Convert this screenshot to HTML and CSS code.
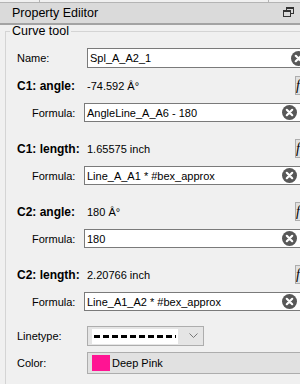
FILE: index.html
```html
<!DOCTYPE html>
<html lang="en">
<head>
    <meta charset="UTF-8">
    <meta name="viewport" content="width=device-width, initial-scale=1.0">
    <title>Property Ediitor</title>
    <link rel="stylesheet" href="styles.css">
</head>
<body>
    <div class="dock">
        <div class="top-strip">
            <span class="strip-cell first"></span>
            <span class="strip-cell middle"></span>
            <span class="strip-cell last"></span>
        </div>

        <div class="title-bar">
            <span class="title">Property Ediitor</span>
            <svg class="float-icon" width="11" height="10" viewBox="0 0 11 10">
                <rect x="3.5" y="0.5" width="7" height="6" fill="none" stroke="#333"/>
                <rect x="3" y="0" width="8" height="2" fill="#333"/>
                <rect x="0.5" y="3.5" width="7" height="6" fill="#dadada" stroke="#333"/>
                <rect x="0" y="3" width="8" height="2" fill="#333"/>
            </svg>
        </div>

        <div class="panel">
            <fieldset class="group">
                <legend>Curve tool</legend>

                <div class="row name-row">
                    <span class="label">Name:</span>
                    <div class="input wide">
                        <span class="text">Spl_A_A2_1</span>
                        <svg class="clear" width="15" height="15" viewBox="0 0 15 15">
                            <circle cx="7.5" cy="7.5" r="7.5" fill="#585858"/>
                            <path d="M4.8 4.8 L10.2 10.2 M10.2 4.8 L4.8 10.2" stroke="#fff" stroke-width="2.2" stroke-linecap="round"/>
                        </svg>
                    </div>
                </div>

                <!-- C1 angle -->
                <div class="section first">
                    <div class="row head-row">
                        <span class="label bold">C1: angle:</span>
                        <span class="value">-74.592 Â°</span>
                        <span class="fx">f</span>
                    </div>
                    <div class="row formula-row">
                        <span class="label small">Formula:</span>
                        <div class="input">
                            <span class="text">AngleLine_A_A6 - 180</span>
                            <svg class="clear" width="15" height="15" viewBox="0 0 15 15">
                                <circle cx="7.5" cy="7.5" r="7.5" fill="#585858"/>
                                <path d="M4.8 4.8 L10.2 10.2 M10.2 4.8 L4.8 10.2" stroke="#fff" stroke-width="2.2" stroke-linecap="round"/>
                            </svg>
                        </div>
                    </div>
                </div>

                <!-- C1 length -->
                <div class="section">
                    <div class="row head-row">
                        <span class="label bold">C1: length:</span>
                        <span class="value">1.65575 inch</span>
                        <span class="fx">f</span>
                    </div>
                    <div class="row formula-row">
                        <span class="label small">Formula:</span>
                        <div class="input">
                            <span class="text">Line_A_A1 * #bex_approx</span>
                            <svg class="clear" width="15" height="15" viewBox="0 0 15 15">
                                <circle cx="7.5" cy="7.5" r="7.5" fill="#585858"/>
                                <path d="M4.8 4.8 L10.2 10.2 M10.2 4.8 L4.8 10.2" stroke="#fff" stroke-width="2.2" stroke-linecap="round"/>
                            </svg>
                        </div>
                    </div>
                </div>

                <!-- C2 angle -->
                <div class="section">
                    <div class="row head-row">
                        <span class="label bold">C2: angle:</span>
                        <span class="value">180 Â°</span>
                        <span class="fx">f</span>
                    </div>
                    <div class="row formula-row">
                        <span class="label small">Formula:</span>
                        <div class="input">
                            <span class="text">180</span>
                            <svg class="clear" width="15" height="15" viewBox="0 0 15 15">
                                <circle cx="7.5" cy="7.5" r="7.5" fill="#585858"/>
                                <path d="M4.8 4.8 L10.2 10.2 M10.2 4.8 L4.8 10.2" stroke="#fff" stroke-width="2.2" stroke-linecap="round"/>
                            </svg>
                        </div>
                    </div>
                </div>

                <!-- C2 length -->
                <div class="section">
                    <div class="row head-row">
                        <span class="label bold">C2: length:</span>
                        <span class="value">2.20766 inch</span>
                        <span class="fx">f</span>
                    </div>
                    <div class="row formula-row">
                        <span class="label small">Formula:</span>
                        <div class="input">
                            <span class="text">Line_A1_A2 * #bex_approx</span>
                            <svg class="clear" width="15" height="15" viewBox="0 0 15 15">
                                <circle cx="7.5" cy="7.5" r="7.5" fill="#585858"/>
                                <path d="M4.8 4.8 L10.2 10.2 M10.2 4.8 L4.8 10.2" stroke="#fff" stroke-width="2.2" stroke-linecap="round"/>
                            </svg>
                        </div>
                    </div>
                </div>

                <div class="row linetype-row">
                    <span class="label">Linetype:</span>
                    <div class="combo">
                        <span class="dash-box">
                            <svg width="82" height="15" viewBox="0 0 82 15">
                                <line x1="0" y1="7.5" x2="82" y2="7.5" stroke="#000" stroke-width="3" stroke-dasharray="6 3"/>
                            </svg>
                        </span>
                        <svg class="chevron" width="9" height="6" viewBox="0 0 9 6">
                            <polyline points="0.5,0.5 4.5,4.5 8.5,0.5" fill="none" stroke="#777" stroke-width="1"/>
                        </svg>
                    </div>
                </div>

                <div class="row color-row">
                    <span class="label">Color:</span>
                    <div class="color-btn">
                        <span class="swatch"></span>
                        <span>Deep Pink</span>
                    </div>
                </div>
            </fieldset>
        </div>
    </div>
</body>
</html>
```

FILE: styles.css
```css
/* Property editor dock */
body {
    margin: 0;
    font-family: 'Liberation Sans', Arial, sans-serif;
    font-size: 11px;
    color: #000;
    background-color: #f0f0f0;
}

.dock {
    width: 300px;
    height: 384px;
    overflow: hidden;
    background-color: #f0f0f0;
}

.top-strip {
    display: flex;
    height: 2px;
    border-bottom: 1px solid #b4b4b4;
}

.strip-cell {
    background-color: #f0f0f0;
}

.strip-cell.first {
    width: 39px;
    border-right: 1px solid #b4b4b4;
}

.strip-cell.middle {
    width: 228px;
    border-right: 1px solid #b4b4b4;
}

.strip-cell.last {
    flex: 1;
}

.title-bar {
    display: flex;
    align-items: center;
    height: 20px;
    padding: 0 6px 0 12px;
    background-color: #dadada;
    border-bottom: 2px solid #a3a3a3;
}

.title {
    font-size: 12.5px;
    flex: 1;
}

.float-icon {
    margin-top: -2px;
}

.panel {
    padding: 0;
}

.group {
    width: 300px;
    margin: 0 0 0 5px;
    padding: 11px 20px 20px 11px;
    border: 1px solid #d4d4d4;
    min-width: 0;
}

.group legend {
    margin-left: -7px;
    padding: 0 2px;
    font-size: 12.5px;
    line-height: 12px;
}

.row {
    display: flex;
    align-items: center;
}

.label {
    width: 70px;
    flex-shrink: 0;
}

.label.bold {
    font-weight: bold;
    font-size: 12px;
}

.label.small {
    width: 52px;
    margin-left: 15px;
}

.input {
    display: flex;
    align-items: center;
    width: 218px;
    height: 19px;
    box-sizing: border-box;
    padding: 0 4px 0 2px;
    border: 1px solid #7a7a7a;
    background-color: #fff;
    flex-shrink: 0;
}

.input.wide {
    width: 223px;
    height: 20px;
    padding-right: 3px;
}

.input .text {
    flex: 1;
    white-space: nowrap;
}

.clear {
    flex-shrink: 0;
}

.name-row {
    height: 20px;
}

.section {
    margin-top: 17px;
}

.section.first {
    margin-top: 8px;
}

.head-row {
    height: 19px;
}

.value {
    flex: 1;
    white-space: nowrap;
}

.fx {
    width: 22px;
    height: 19px;
    box-sizing: border-box;
    border: 1px solid #adadad;
    background-color: #e1e1e1;
    font-family: 'Liberation Serif', serif;
    font-style: italic;
    font-size: 14px;
    line-height: 17px;
    padding-left: 0;
    flex-shrink: 0;
}

.formula-row {
    margin-top: 8px;
    height: 19px;
}

.linetype-row {
    margin-top: 15px;
    height: 20px;
}

.combo {
    display: flex;
    align-items: center;
    width: 117px;
    height: 20px;
    box-sizing: border-box;
    padding: 0 5px 0 4px;
    border: 1px solid #adadad;
    background-color: #e5e5e5;
}

.dash-box {
    display: flex;
    align-items: center;
    width: 86px;
    height: 15px;
    padding-left: 2px;
    box-sizing: border-box;
    background-color: #fff;
}

.chevron {
    margin-left: auto;
}

.color-row {
    margin-top: 6px;
    height: 22px;
}

.color-btn {
    display: flex;
    align-items: center;
    gap: 2px;
    width: 240px;
    height: 22px;
    box-sizing: border-box;
    padding-left: 4px;
    border: 1px solid #adadad;
    background-color: #e1e1e1;
    flex-shrink: 0;
}

.swatch {
    width: 18px;
    height: 16px;
    background-color: #ff1493;
}
```
